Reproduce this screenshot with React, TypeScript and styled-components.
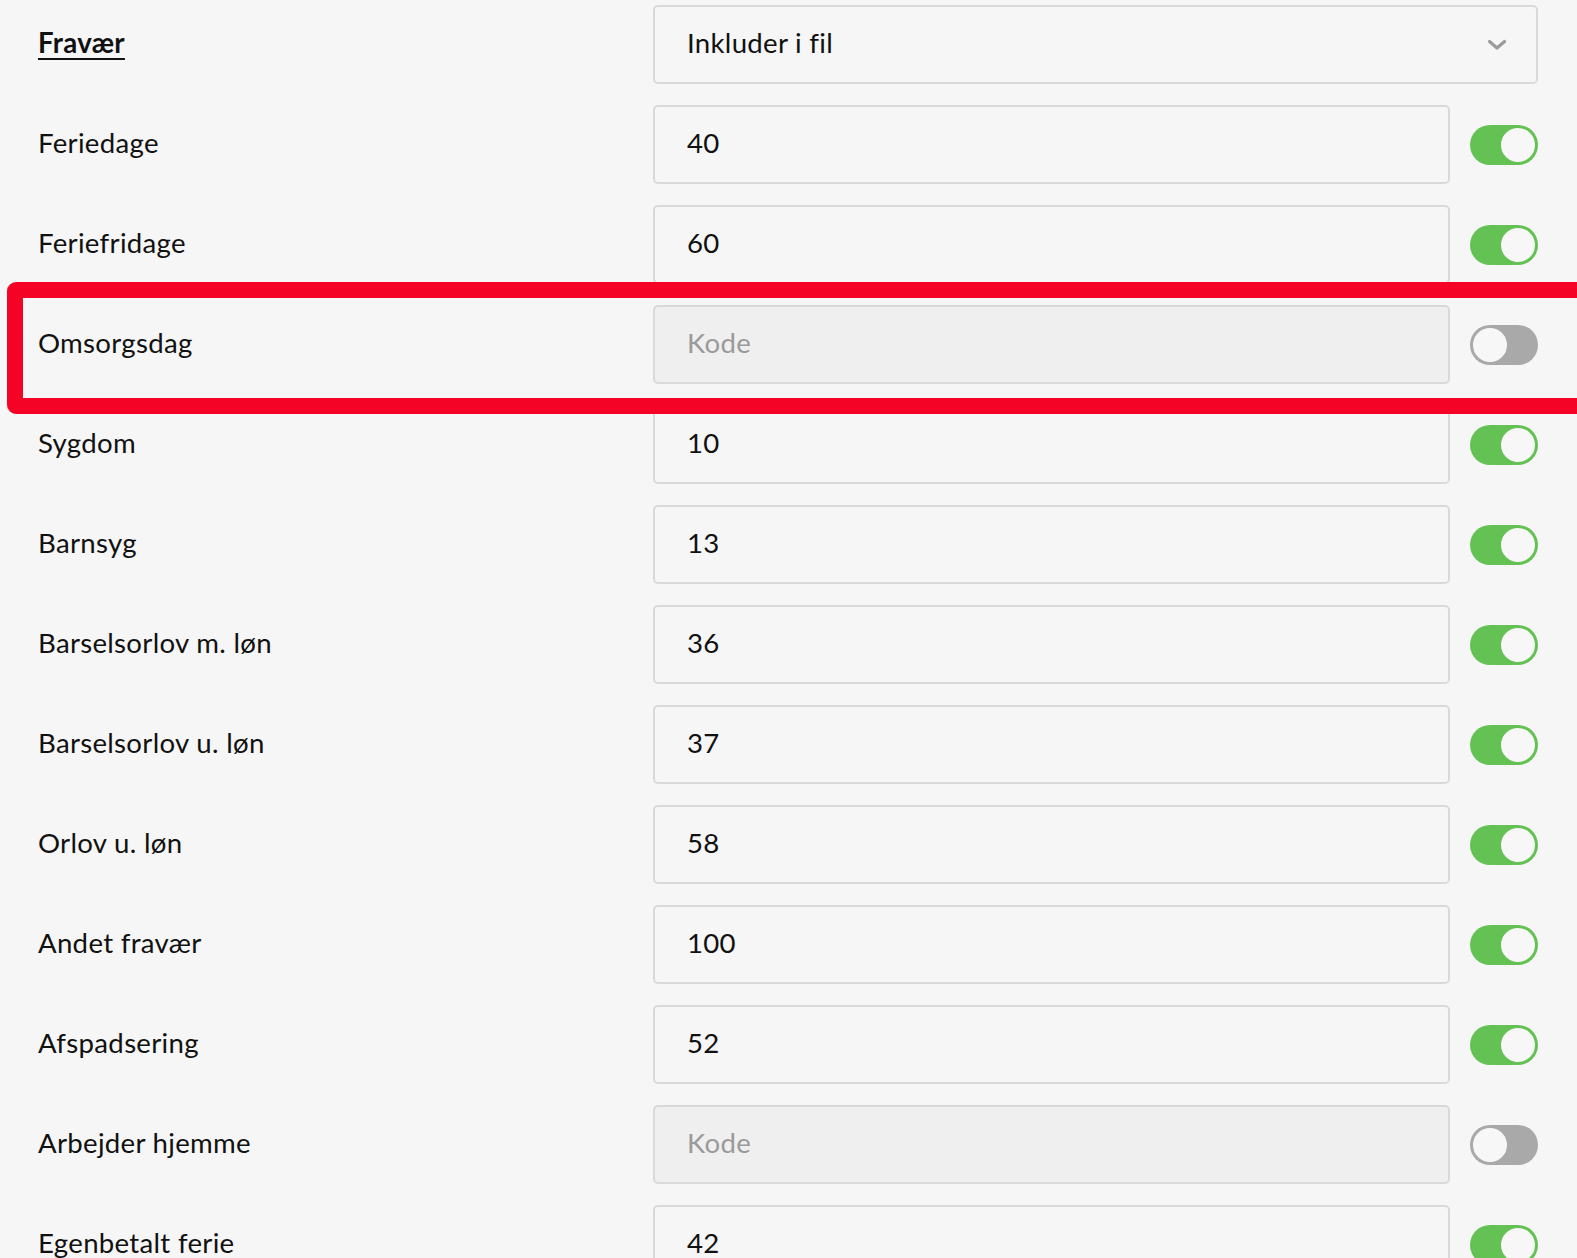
import { Fragment } from 'react'
import styled, { createGlobalStyle } from 'styled-components'

const GlobalStyle = createGlobalStyle`
  html, body {
    margin: 0;
    padding: 0;
    background: #f6f6f6;
  }
  body {
    font-family: Lato, 'Open Sans', sans-serif;
    color: #111;
  }
`

const Page = styled.div`
  position: relative;
  padding: 5px 39px 0 38px;
  overflow: hidden;
  height: 1258px;
  box-sizing: border-box;
`

const Form = styled.div`
  display: grid;
  grid-template-columns: 595px 797px 68px;
  grid-auto-rows: 79px;
  column-gap: 20px;
  row-gap: 21px;
  align-items: center;
`

const Label = styled.div<{ heading?: boolean }>`
  font-size: 27.6px;
  font-weight: ${({ heading }) => (heading ? 700 : 400)};
  text-decoration: ${({ heading }) => (heading ? 'underline' : 'none')};
  text-underline-offset: 5px;
  text-decoration-thickness: 2px;
  letter-spacing: 0.3px;
  padding-bottom: 4px;
`

const Field = styled.div<{ disabled?: boolean; wide?: boolean }>`
  grid-column: ${({ wide }) => (wide ? '2 / 4' : 'auto')};
  height: 79px;
  box-sizing: border-box;
  border: 2px solid #d9d9d9;
  border-radius: 5px;
  background: ${({ disabled }) => (disabled ? '#efefef' : '#f6f6f6')};
  color: ${({ disabled }) => (disabled ? '#9a9a9a' : '#111')};
  display: flex;
  align-items: center;
  justify-content: space-between;
  padding: 0 29px 4px 32px;
  font-size: 27.6px;
  letter-spacing: 0.3px;
`

const Chevron = styled.svg`
  width: 20px;
  height: 14px;
  margin-top: 4px;
`

const Toggle = styled.div<{ on: boolean }>`
  width: 68px;
  height: 40px;
  box-sizing: border-box;
  border-radius: 20px;
  background: ${({ on }) => (on ? '#64c254' : '#a9a9a9')};
  display: flex;
  justify-content: ${({ on }) => (on ? 'flex-end' : 'flex-start')};
  align-items: center;
  padding: 1px;
`

const Knob = styled.div<{ on: boolean }>`
  width: 38px;
  height: 38px;
  box-sizing: border-box;
  border-radius: 50%;
  background: #f7f7f7;
  border: 2px solid ${({ on }) => (on ? '#64c254' : '#a9a9a9')};
`

const Highlight = styled.div`
  position: absolute;
  left: 7px;
  top: 282px;
  width: 1600px;
  height: 132px;
  box-sizing: border-box;
  border: 16px solid #f50227;
  border-radius: 9px;
  pointer-events: none;
`

const rows: { label: string; code?: string }[] = [
  { label: 'Feriedage', code: '40' },
  { label: 'Feriefridage', code: '60' },
  { label: 'Omsorgsdag' },
  { label: 'Sygdom', code: '10' },
  { label: 'Barnsyg', code: '13' },
  { label: 'Barselsorlov m. løn', code: '36' },
  { label: 'Barselsorlov u. løn', code: '37' },
  { label: 'Orlov u. løn', code: '58' },
  { label: 'Andet fravær', code: '100' },
  { label: 'Afspadsering', code: '52' },
  { label: 'Arbejder hjemme' },
  { label: 'Egenbetalt ferie', code: '42' },
]

const App = () => {
  return (
    <Page>
      <GlobalStyle />
      <Form>
        <Label heading>Fravær</Label>
        <Field wide>
          <span>Inkluder i fil</span>
          <Chevron viewBox="0 0 20 14">
            <path d="M2.5 3.5 L10 10 L17.5 3.5" fill="none" stroke="#9b9b9b" strokeWidth="3.2" strokeLinecap="round" strokeLinejoin="round" />
          </Chevron>
        </Field>
        {rows.map((r) => (
          <Fragment key={r.label}>
            <Label>{r.label}</Label>
            <Field disabled={!r.code}>{r.code ?? 'Kode'}</Field>
            <Toggle on={!!r.code}>
              <Knob on={!!r.code} />
            </Toggle>
          </Fragment>
        ))}
      </Form>
      <Highlight />
    </Page>
  )
}

export default App
